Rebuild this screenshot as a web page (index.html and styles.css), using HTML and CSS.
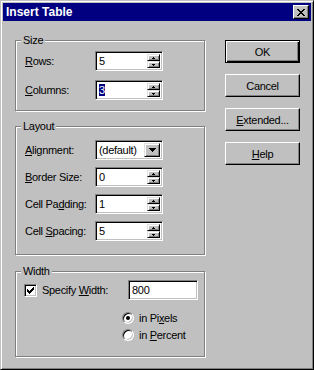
FILE: index.html
```html
<!DOCTYPE html>
<html>

<head>
    <title>Insert Table</title>
    <link rel="stylesheet" href="styles.css">
</head>

<body>
    <div class="dialog">
        <div class="titlebar">
            <span class="title">Insert Table</span>
            <span class="close">
                <svg width="8" height="7" viewBox="0 0 8 7"><path d="M0 0h2v1h-2zM6 0h2v1h-2zM1 1h2v1h-2zM5 1h2v1h-2zM2 2h4v1h-4zM3 3h2v1h-2zM2 4h4v1h-4zM1 5h2v1h-2zM5 5h2v1h-2zM0 6h2v1h-2zM6 6h2v1h-2z"/></svg>
            </span>
        </div>

        <div class="content">
            <div class="groups">
                <div class="group group-size">
                    <div class="group-title">Size</div>
                    <div class="fields">
                        <div class="field">
                            <label><u>R</u>ows:</label>
                            <div class="spin">
                                <span class="value">5</span>
                                <span class="spin-buttons">
                                    <span class="spin-btn"><svg width="3" height="2"><path d="M1 0h1v1h1v1H0V1h1z"/></svg></span>
                                    <span class="spin-btn"><svg width="3" height="2"><path d="M0 0h3v1H2v1H1V1H0z"/></svg></span>
                                </span>
                            </div>
                        </div>
                        <div class="field">
                            <label><u>C</u>olumns:</label>
                            <div class="spin">
                                <span class="value"><span class="selected">3</span></span>
                                <span class="spin-buttons">
                                    <span class="spin-btn"><svg width="3" height="2"><path d="M1 0h1v1h1v1H0V1h1z"/></svg></span>
                                    <span class="spin-btn"><svg width="3" height="2"><path d="M0 0h3v1H2v1H1V1H0z"/></svg></span>
                                </span>
                            </div>
                        </div>
                    </div>
                </div>

                <div class="group group-layout">
                    <div class="group-title">Layout</div>
                    <div class="fields">
                        <div class="field">
                            <label><u>A</u>lignment:</label>
                            <div class="spin">
                                <span class="value">(default)</span>
                                <span class="drop-btn"><svg width="7" height="4"><path d="M0 0h7v1H6v1H5v1H4v1H3V3H2V2H1V1H0z"/></svg></span>
                            </div>
                        </div>
                        <div class="field">
                            <label><u>B</u>order Size:</label>
                            <div class="spin">
                                <span class="value">0</span>
                                <span class="spin-buttons">
                                    <span class="spin-btn"><svg width="3" height="2"><path d="M1 0h1v1h1v1H0V1h1z"/></svg></span>
                                    <span class="spin-btn"><svg width="3" height="2"><path d="M0 0h3v1H2v1H1V1H0z"/></svg></span>
                                </span>
                            </div>
                        </div>
                        <div class="field">
                            <label>Cell Pa<u>d</u>ding:</label>
                            <div class="spin">
                                <span class="value">1</span>
                                <span class="spin-buttons">
                                    <span class="spin-btn"><svg width="3" height="2"><path d="M1 0h1v1h1v1H0V1h1z"/></svg></span>
                                    <span class="spin-btn"><svg width="3" height="2"><path d="M0 0h3v1H2v1H1V1H0z"/></svg></span>
                                </span>
                            </div>
                        </div>
                        <div class="field">
                            <label>Cell <u>S</u>pacing:</label>
                            <div class="spin">
                                <span class="value">5</span>
                                <span class="spin-buttons">
                                    <span class="spin-btn"><svg width="3" height="2"><path d="M1 0h1v1h1v1H0V1h1z"/></svg></span>
                                    <span class="spin-btn"><svg width="3" height="2"><path d="M0 0h3v1H2v1H1V1H0z"/></svg></span>
                                </span>
                            </div>
                        </div>
                    </div>
                </div>

                <div class="group group-width">
                    <div class="group-title">Width</div>
                    <div class="check-row">
                        <span class="check">
                            <svg width="7" height="7"><path d="M6 0h1v1h-1zM5 1h2v1h-2zM0 2h1v1h-1zM4 2h3v1h-3zM0 3h2v1h-2zM3 3h3v1h-3zM0 4h5v1h-5zM1 5h3v1h-3zM2 6h1v1h-1z"/></svg>
                        </span>
                        <span class="check-label">Specify <u>W</u>idth:</span>
                        <span class="text-input">800</span>
                    </div>
                    <div class="radios">
                        <div class="radio-row"><span class="radio on"></span><span>in Pi<u>x</u>els</span></div>
                        <div class="radio-row"><span class="radio"></span><span>in <u>P</u>ercent</span></div>
                    </div>
                </div>
            </div>

            <div class="actions">
                <span class="btn btn-default">OK</span>
                <span class="btn">Cancel</span>
                <span class="btn"><u>E</u>xtended...</span>
                <span class="btn"><u>H</u>elp</span>
            </div>
        </div>
    </div>
</body>

</html>
```

FILE: styles.css
```css
body {
    margin: 0;
    background-color: #c0c0c0;
}

.dialog {
    width: 314px;
    height: 370px;
    box-sizing: border-box;
    padding: 2px;
    background-color: #c0c0c0;
    border: 1px solid;
    border-color: #c0c0c0 #000 #000 #c0c0c0;
    box-shadow: inset 1px 1px #fff, inset -1px -1px #808080;
    font-family: "Liberation Sans", Arial, sans-serif;
    font-size: 11px;
    letter-spacing: -0.3px;
    color: #000;
}

.titlebar {
    height: 18px;
    display: flex;
    align-items: center;
    padding: 0 2px 0 3px;
    background-color: #000080;
}

.title {
    flex: 1;
    color: #fff;
    font-weight: bold;
    font-size: 12px;
    letter-spacing: 0;
}

.close {
    width: 16px;
    height: 14px;
    box-sizing: border-box;
    display: flex;
    align-items: center;
    justify-content: center;
    background-color: #c0c0c0;
    border: 1px solid;
    border-color: #fff #000 #000 #fff;
    box-shadow: inset -1px -1px #808080;
}

.content {
    display: flex;
    padding: 19px 0 0 12px;
}

.groups {
    width: 190px;
}

.group {
    border: 1px solid #808080;
    box-shadow: 1px 1px #fff, inset 1px 1px #fff;
    padding: 0 0 10px 9px;
}

.group-title {
    display: table;
    margin: -7px 0 0 -4px;
    padding: 0 2px;
    line-height: 13px;
    background-color: #c0c0c0;
}

.fields {
    display: flex;
    flex-direction: column;
}

.group-size .fields {
    margin-top: 4px;
    gap: 9px;
}

.group-layout {
    margin-top: 15px;
    padding-bottom: 13px;
}

.group-layout .fields {
    margin-top: 7px;
    gap: 7px;
}

.group-width {
    margin-top: 16px;
    padding-bottom: 13px;
}

.field {
    display: flex;
    align-items: center;
    height: 20px;
}

.field label {
    width: 70px;
}

.spin,
.text-input {
    width: 68px;
    height: 20px;
    box-sizing: border-box;
    display: flex;
    align-items: center;
    padding: 2px 2px 2px 2px;
    background-color: #fff;
    border: 1px solid;
    border-color: #808080 #fff #fff #808080;
    box-shadow: inset 1px 1px #000, inset -1px -1px #c0c0c0;
}

.value {
    flex: 1;
    padding-left: 1px;
}

.selected {
    background-color: #000080;
    color: #fff;
}

.spin-buttons {
    width: 13px;
    align-self: stretch;
    display: flex;
    flex-direction: column;
}

.spin-btn,
.drop-btn {
    flex: 1;
    box-sizing: border-box;
    display: flex;
    align-items: center;
    justify-content: center;
    background-color: #c0c0c0;
    border: 1px solid;
    border-color: #dfdfdf #000 #000 #dfdfdf;
    box-shadow: inset 1px 1px #fff, inset -1px -1px #808080;
}

.drop-btn {
    flex: none;
    width: 16px;
    align-self: stretch;
}

.check-row {
    display: flex;
    align-items: center;
    height: 20px;
    margin-top: 2px;
}

.check {
    width: 13px;
    height: 13px;
    box-sizing: border-box;
    margin-left: -1px;
    display: flex;
    align-items: center;
    justify-content: center;
    background-color: #fff;
    border: 1px solid;
    border-color: #808080 #fff #fff #808080;
    box-shadow: inset 1px 1px #000, inset -1px -1px #c0c0c0;
}

.check-label {
    width: 86px;
    margin-left: 5px;
}

.text-input {
    width: 70px;
    padding-left: 3px;
}

.radios {
    margin: 9px 0 0 97px;
}

.radio-row {
    display: flex;
    align-items: center;
    height: 17px;
}

.radio {
    width: 12px;
    height: 12px;
    box-sizing: border-box;
    margin-right: 5px;
    display: flex;
    align-items: center;
    justify-content: center;
    border-radius: 50%;
    background-color: #fff;
    border: 1px solid;
    border-color: #808080 #fff #fff #808080;
    box-shadow: inset 1px 1px #000, inset -1px -1px #c0c0c0;
}

.radio.on::after {
    content: "";
    width: 4px;
    height: 4px;
    border-radius: 50%;
    background-color: #000;
}

.actions {
    display: flex;
    flex-direction: column;
    gap: 11px;
    margin-left: 20px;
}

.btn {
    width: 75px;
    height: 23px;
    box-sizing: border-box;
    display: flex;
    align-items: center;
    justify-content: center;
    background-color: #c0c0c0;
    border: 1px solid;
    border-color: #fff #000 #000 #fff;
    box-shadow: inset -1px -1px #808080;
}

.btn-default {
    border-color: #000;
    box-shadow: inset 1px 1px #fff, inset -1px -1px #000, inset -2px -2px #808080;
}
```
